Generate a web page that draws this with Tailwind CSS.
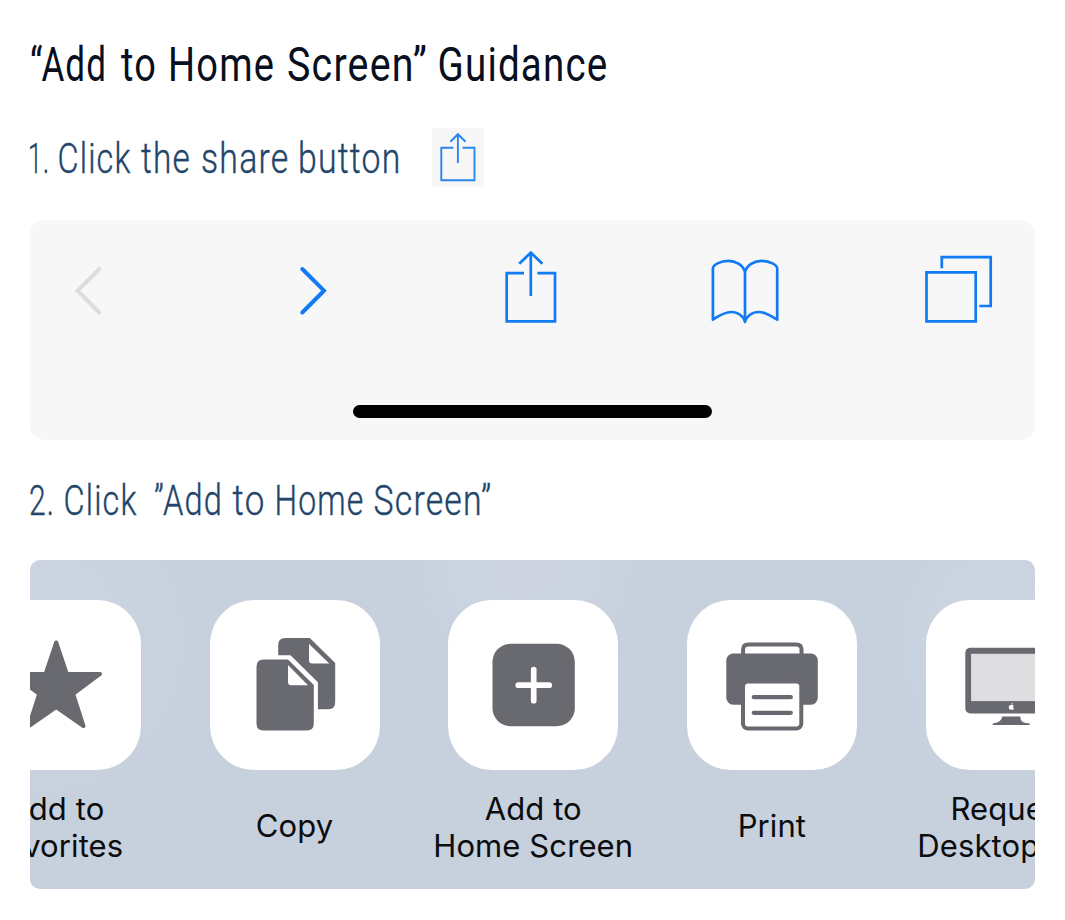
<!DOCTYPE html>
<html lang="en">
<head>
<meta charset="utf-8">
<title>Add to Home Screen Guidance</title>
<script src="https://cdn.jsdelivr.net/npm/@tailwindcss/browser@4"></script>
</head>
<body class="bg-white">
<main class="h-[920px] w-[1065px] overflow-hidden bg-white px-[30px]">
  <h1 class="h-[128px]">
    <svg class="block h-[128px] w-[620px] overflow-visible font-['Roboto',sans-serif] text-[48px] font-normal tracking-[1.5px]" viewBox="30 0 620 128" fill="#070f20">
      <text x="30" y="81" textLength="77" lengthAdjust="spacingAndGlyphs">“Add</text>
      <text x="121" y="81" textLength="36" lengthAdjust="spacingAndGlyphs">to</text>
      <text x="168" y="81" textLength="107" lengthAdjust="spacingAndGlyphs">Home</text>
      <text x="287" y="81" textLength="141" lengthAdjust="spacingAndGlyphs">Screen”</text>
      <text x="437.500" y="81" textLength="171" lengthAdjust="spacingAndGlyphs">Guidance</text>
    </svg>
  </h1>
  <div class="flex h-[92px] items-start">
    <svg class="block h-[92px] w-[402px] overflow-visible font-['Roboto',sans-serif] text-[42px] font-light tracking-[1.5px]" viewBox="30 128 402 92" fill="#23456a" stroke="#23456a" stroke-width="0.400">
      <text x="28" y="173" textLength="22" lengthAdjust="spacingAndGlyphs">1.</text>
      <text x="57.500" y="173" textLength="74" lengthAdjust="spacingAndGlyphs">Click</text>
      <text x="141" y="173" textLength="50" lengthAdjust="spacingAndGlyphs">the</text>
      <text x="201" y="173" textLength="88.500" lengthAdjust="spacingAndGlyphs">share</text>
      <text x="298" y="173" textLength="103.500" lengthAdjust="spacingAndGlyphs">button</text>
    </svg>
    <div class="h-[59px] w-[52px] bg-[#f7f7f7]">
      <svg class="block h-[59px] w-[52px]" viewBox="432 128 52 59" fill="none" stroke="#2a86f0" stroke-width="1.900">
        <path d="M453.500 147.700H441.300V180.200H474.500V147.700H462.500M457.900 134V163M450.300 141.700L457.900 134.200L465.600 141.700"/>
      </svg>
    </div>
  </div>

  <section class="flex h-[220px] flex-col items-center rounded-[14px] bg-[#f7f7f7]">
    <div class="flex h-[184.500px] w-full shrink-0 pt-[25px] pl-[40px]">
      <svg class="block h-[84px] w-[40px]" viewBox="70 245 40 84" fill="none" stroke="#dcdcdf" stroke-width="4" stroke-linecap="round"><path d="M99.300 269L77.600 290.700L99.300 312.500"/></svg>
      <svg class="ml-[180px] block h-[84px] w-[50px]" viewBox="290 245 50 84" fill="none" stroke="#117bf3" stroke-width="4" stroke-linecap="round"><path d="M302.300 269L324 290.700L302.300 312.500"/></svg>
      <svg class="ml-[160px] block h-[84px] w-[60px]" viewBox="500 245 60 84" fill="none" stroke="#117bf3" stroke-width="2.700"><path d="M524 273.200H506.700V321.300H555V273.200H537.300M530.800 252V296M519.200 263.800L530.800 252.600L542.400 263.800"/></svg>
      <svg class="ml-[145px] block h-[84px] w-[80px]" viewBox="705 245 80 84" fill="none" stroke="#117bf3" stroke-width="2.700" stroke-linejoin="round"><path d="M745 322V272C743 264.500 735 260.800 728.500 260.800C720 260.800 712.900 265 712.900 268.500V319.700C718 316.500 724 312 731 312C738 312 743.500 316 745 322C746.500 316 752 312 759 312C766 312 772 316.500 777.200 319.700V268.500C777.200 265 770 260.800 761.500 260.800C755 260.800 747 264.500 745 272"/></svg>
      <svg class="ml-[135px] block h-[84px] w-[80px]" viewBox="920 245 80 84" fill="none" stroke="#117bf3" stroke-width="2.700"><path d="M926.500 272.400H975.700V321.300H926.500ZM941.800 268.300V257.200H990.700V306H979.300"/></svg>
    </div>
    <div class="h-[13.500px] w-[359px] shrink-0 rounded-full bg-black"></div>
  </section>

  <div class="h-[119.500px]">
    <svg class="block h-[119.500px] w-[520px] overflow-visible font-['Roboto',sans-serif] text-[42px] font-light tracking-[1.5px]" viewBox="30 440 520 119.5" fill="#23456a" stroke="#23456a" stroke-width="0.400">
      <text x="29" y="515" textLength="26" lengthAdjust="spacingAndGlyphs">2.</text>
      <text x="63.500" y="515" textLength="74" lengthAdjust="spacingAndGlyphs">Click</text>
      <text x="154" y="515" textLength="69" lengthAdjust="spacingAndGlyphs">”Add</text>
      <text x="232.500" y="515" textLength="33" lengthAdjust="spacingAndGlyphs">to</text>
      <text x="274.500" y="515" textLength="90" lengthAdjust="spacingAndGlyphs">Home</text>
      <text x="373.500" y="515" textLength="119" lengthAdjust="spacingAndGlyphs">Screen”</text>
    </svg>
  </div>

  <section class="h-[329.500px] overflow-hidden rounded-[10px] bg-[#c7d0dd] bg-[radial-gradient(circle_at_0px_80px,#cdd3e2_0px,#cbd3e0_80px,#c8d2de_110px,#c8d1dd_150px,transparent_165px),radial-gradient(circle_at_495px_10px,#cdd3e2_0px,#cbd3e0_65px,#c8d2de_90px,transparent_125px),radial-gradient(circle_at_985px_80px,#cdd3e2_0px,#cbd3e0_80px,#c8d2de_105px,transparent_135px)]">
    <div class="-ml-[93.500px] flex w-[1195px] pt-[40px] text-center font-['Inter',sans-serif] text-[31px] leading-[37px] tracking-[0.1px] text-[#0b0c0e]">
      <div class="flex w-[238.700px] shrink-0 flex-col items-center">
        <div class="size-[170px] rounded-[44px] bg-white">
          <svg class="block size-[170px]" viewBox="-28.500 599.500 170 170" fill="#696970" stroke="#696970" stroke-width="4" stroke-linejoin="round"><path d="M56.700 642L67.300 673.500H100.500L73.700 693.300L84 725.500L56.700 706.500L29.400 725.500L39.700 693.300L12.900 673.500H46.100Z"/></svg>
        </div>
        <div class="flex h-[114px] items-center whitespace-nowrap">Add to<br>Favorites</div>
      </div>
      <div class="flex w-[238.700px] shrink-0 flex-col items-center">
        <div class="size-[170px] rounded-[44px] bg-white">
          <svg class="block size-[170px]" viewBox="209.500 599.500 170 170" fill="#696970"><path fill-rule="evenodd" d="M263 659H287.500L313.300 684.500V723Q313.300 730 306.300 730H263Q256 730 256 723V666Q256 659 263 659ZM287.500 664.500V681.500Q287.500 684.700 290.700 684.700H307.500Z"/><path fill-rule="evenodd" d="M284.700 637.500H309.300L334.700 662.500V701.700Q334.700 708.700 327.700 708.700H317.400V681.700L290 654.700H277.700V644.500Q277.700 637.500 284.700 637.500ZM308.500 643.500V660Q308.500 663 311.500 663H328.800Z"/></svg>
        </div>
        <div class="flex h-[111px] items-center">Copy</div>
      </div>
      <div class="flex w-[238.700px] shrink-0 flex-col items-center">
        <div class="size-[170px] rounded-[44px] bg-white">
          <svg class="block size-[170px]" viewBox="448 599.500 170 170"><rect x="492.500" y="643.300" width="82.300" height="82.400" rx="18" fill="#696970"/><path d="M518.300 684.700H549.200M533.700 669.200V700.200" stroke="#fff" stroke-width="5.700" stroke-linecap="round"/></svg>
        </div>
        <div class="flex h-[114px] items-center whitespace-nowrap">Add to<br>Home Screen</div>
      </div>
      <div class="flex w-[238.700px] shrink-0 flex-col items-center">
        <div class="size-[170px] rounded-[44px] bg-white">
          <svg class="block size-[170px]" viewBox="686.700 599.500 170 170"><rect x="726" y="653" width="91.500" height="51.300" rx="7" fill="#696970"/><path d="M742.800 654V649Q742.800 643.900 748 643.900H796Q801.200 643.900 801.200 649V654" fill="none" stroke="#696970" stroke-width="4"/><rect x="740.700" y="679" width="62.300" height="51" rx="7" fill="#696970"/><rect x="744.700" y="683" width="54.300" height="43" rx="3" fill="#fff"/><path d="M753.500 696.700H790.500M753.500 712.300H790.500" stroke="#696970" stroke-width="4.300" stroke-linecap="round"/></svg>
        </div>
        <div class="flex h-[111px] items-center">Print</div>
      </div>
      <div class="flex w-[238.700px] shrink-0 flex-col items-center">
        <div class="size-[170px] rounded-[44px] bg-white">
          <svg class="block size-[170px]" viewBox="925.300 599.500 170 170" fill="#696970"><rect x="964.600" y="647.300" width="92" height="65.700" rx="5"/><rect x="970.400" y="653.300" width="80.400" height="47.300" fill="#dedee0"/><path fill="#fff" d="M1010.500 704.500C1011.500 704 1012.500 704.200 1013 705C1012.200 706 1012.300 707.500 1013.200 708.200C1012.500 709.700 1011.500 709.500 1010.500 709C1007.500 709.800 1007 704 1010.500 704.500ZM1010.700 703.900Q1010.800 702.500 1012.200 702.200Q1012.200 703.700 1010.700 703.900Z"/><path d="M1001.500 716H1019.500Q1019.500 723 1029 723V724.500H992V723Q1001 722 1001.500 716Z"/></svg>
        </div>
        <div class="flex h-[114px] items-center whitespace-nowrap">Request<br>Desktop Site</div>
      </div>
    </div>
  </section>
</main>
</body>
</html>
